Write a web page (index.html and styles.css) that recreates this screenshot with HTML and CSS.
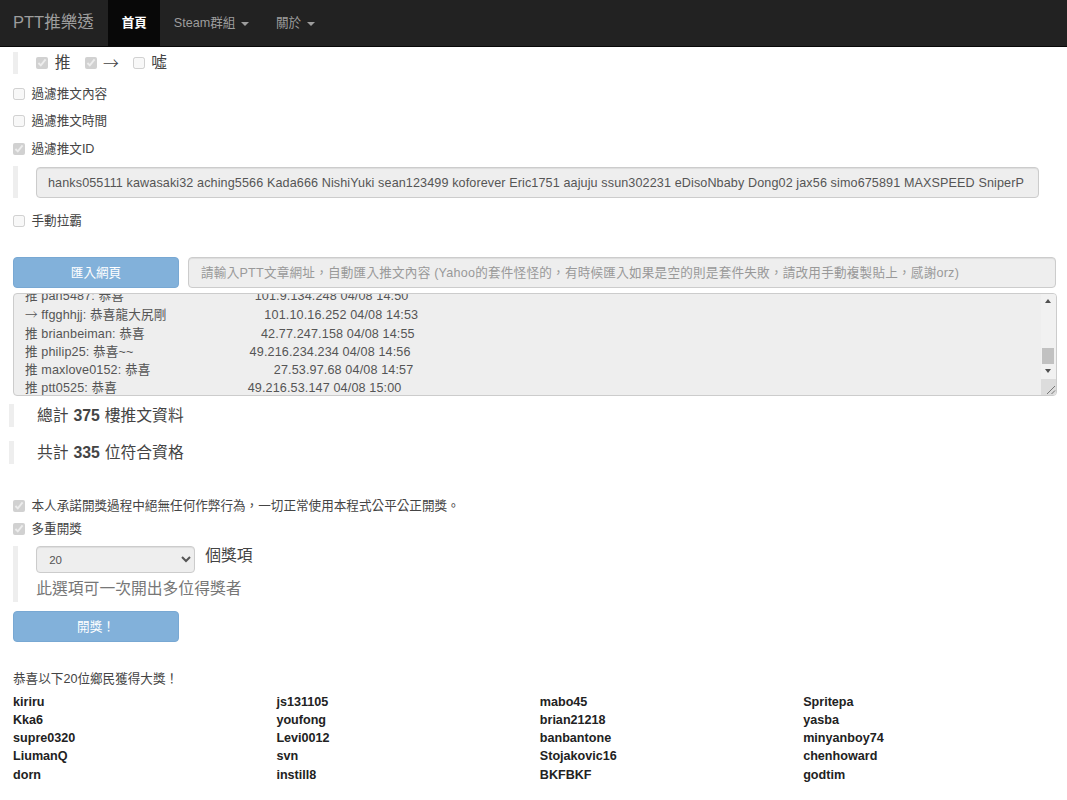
FILE: index.html
```html
<!DOCTYPE html>
<html lang="zh-Hant">
<head>
<meta charset="utf-8">
<title>PTT推樂透</title>
<link rel="stylesheet" href="styles.css">
</head>
<body>
<nav class="navbar">
  <a class="brand">PTT推樂透</a>
  <a class="nav-item active">首頁</a>
  <a class="nav-item">Steam群組 <span class="caret"></span></a>
  <a class="nav-item">關於 <span class="caret"></span></a>
</nav>
<main class="page">
  <div class="quote quote-types">
    <label class="type"><input type="checkbox" checked disabled> 推</label>
    <label class="type"><input type="checkbox" checked disabled> <span class="wide">→</span></label>
    <label class="type"><input type="checkbox" disabled> 噓</label>
  </div>
  <label class="check filter"><input type="checkbox" disabled> 過濾推文內容</label>
  <label class="check filter"><input type="checkbox" disabled> 過濾推文時間</label>
  <label class="check filter"><input type="checkbox" checked disabled> 過濾推文ID</label>
  <div class="quote quote-ids">
    <input class="field ids" type="text" disabled value="hanks055111 kawasaki32 aching5566 Kada666 NishiYuki sean123499 koforever Eric1751 aajuju ssun302231 eDisoNbaby Dong02 jax56 simo675891 MAXSPEED SniperP">
  </div>
  <label class="check filter manual"><input type="checkbox" disabled> 手動拉霸</label>

  <div class="import">
    <button class="btn" disabled>匯入網頁</button>
    <input class="field url" type="text" disabled placeholder="請輸入PTT文章網址，自動匯入推文內容 (Yahoo的套件怪怪的，有時候匯入如果是空的則是套件失敗，請改用手動複製貼上，感謝orz)">
  </div>

  <div class="log">
    <div class="log-lines">
      <div class="log-line">推 pan5487: 恭喜                                    101.9.134.248 04/08 14:50</div>
      <div class="log-line"><span class="wide">→</span> ffgghhjj: 恭喜龍大尻剛                           101.10.16.252 04/08 14:53</div>
      <div class="log-line">推 brianbeiman: 恭喜                                42.77.247.158 04/08 14:55</div>
      <div class="log-line">推 philip25: 恭喜~~                                49.216.234.234 04/08 14:56</div>
      <div class="log-line">推 maxlove0152: 恭喜                                  27.53.97.68 04/08 14:57</div>
      <div class="log-line">推 ptt0525: 恭喜                                    49.216.53.147 04/08 15:00</div>
    </div>
    <div class="scrollbar">
      <span class="arrow up"></span>
      <span class="track"><span class="thumb"></span></span>
      <span class="arrow down"></span>
      <span class="corner">
        <svg width="15" height="16" viewBox="0 0 15 16"><path d="M6 15 14 7M10.5 15l3.5-3.5" stroke="#777" stroke-width="1" fill="none"/></svg>
      </span>
    </div>
  </div>

  <div class="quote quote-stat first">總計 <b>375</b> 樓推文資料</div>
  <div class="quote quote-stat">共計 <b>335</b> 位符合資格</div>

  <label class="check promise"><input type="checkbox" checked disabled> 本人承諾開獎過程中絕無任何作弊行為，一切正常使用本程式公平公正開獎。</label>
  <label class="check multi"><input type="checkbox" checked disabled> 多重開獎</label>
  <div class="quote quote-multi">
    <div class="prize-row">
      <select class="field count" disabled><option>20</option></select>
      <span>個獎項</span>
    </div>
    <div class="hint">此選項可一次開出多位得獎者</div>
  </div>
  <button class="btn draw" disabled>開獎！</button>

  <p class="congrats">恭喜以下20位鄉民獲得大獎！</p>
  <div class="winners">
    <b>kiriru</b><b>js131105</b><b>mabo45</b><b>Spritepa</b>
    <b>Kka6</b><b>youfong</b><b>brian21218</b><b>yasba</b>
    <b>supre0320</b><b>Levi0012</b><b>banbantone</b><b>minyanboy74</b>
    <b>LiumanQ</b><b>svn</b><b>Stojakovic16</b><b>chenhoward</b>
    <b>dorn</b><b>instill8</b><b>BKFBKF</b><b>godtim</b>
  </div>
</main>
</body>
</html>
```
FILE: styles.css
```css
* { box-sizing: border-box; }
html, body { margin: 0; height: 800px; overflow: hidden; }
body {
  font-family: "Liberation Sans", "Noto Sans CJK TC", sans-serif;
  font-size: 12.6px;
  line-height: 18px;
  color: #444;
  background: #fff;
}
.navbar {
  display: flex;
  height: 47px;
  background: #222;
  border-bottom: 1px solid #080808;
}
.brand { padding: 0 14.5px 0 13px; font-size: 16.5px; line-height: 45px; color: #9d9d9d; }
.nav-item { padding: 0 13.5px; line-height: 46px; color: #9d9d9d; }
.nav-item.active { background: #080808; color: #fff; font-weight: 700; }
.caret {
  display: inline-block;
  margin-left: 2px;
  vertical-align: middle;
  border-top: 4px solid #9d9d9d;
  border-left: 4px solid transparent;
  border-right: 4px solid transparent;
}
.wide { font-family: "Noto Sans CJK TC", sans-serif; font-weight: 300; }
.page { padding: 5px 10px 0 13px; }
input[type="checkbox"] { width: 12px; height: 12px; margin: 0; flex: none; }
.quote { border-left: 5px solid #eee; padding-left: 18.2px; font-size: 15.8px; }
.quote-types { display: flex; height: 22px; align-items: center; gap: 14px; }
.type { display: flex; align-items: center; gap: 6.5px; }
.check { display: flex; align-items: center; gap: 6.5px; height: 18px; }
.filter { margin-top: 9.5px; }
.quote-types + .filter { margin-top: 10.5px; }
.quote-ids { margin-top: 8.5px; height: 32px; padding-top: 1px; }
.field {
  font: inherit;
  font-size: 12.6px;
  color: #555;
  background: #eee;
  border: 1px solid #ccc;
  border-radius: 4px;
  box-shadow: inset 0 1px 1px rgba(0,0,0,.075);
  opacity: 1;
}
.ids { display: block; width: 1002.5px; height: 31px; padding: 0 10.8px; letter-spacing: .11px; }
.manual { margin-top: 14px; }
.import { display: flex; gap: 9px; margin-top: 27px; }
.btn {
  width: 166px;
  height: 31px;
  font: inherit;
  color: #fff;
  background: #82b1da;
  border: 1px solid #78a8d3;
  border-radius: 4px;
  padding: 0;
  opacity: 1;
}
.url { width: 868px; height: 31px; padding: 0 12px; letter-spacing: .22px; }
.url::placeholder { color: #999; opacity: 1; }
.log {
  position: relative;
  width: 1043.7px;
  height: 103px;
  margin-top: 4.5px;
  overflow: hidden;
  background: #eee;
  border: 1px solid #ccc;
  border-radius: 4px;
  color: #555;
}
.log-lines { margin-top: -6.4px; padding-left: 11px; letter-spacing: .13px; line-height: 18.2px; }
.log-line { white-space: pre; }
.scrollbar {
  position: absolute;
  top: 0;
  right: 0;
  bottom: 0;
  width: 15px;
  display: flex;
  flex-direction: column;
  background: #f1f1f1;
}
.arrow { height: 15px; flex: none; position: relative; }
.arrow::after {
  content: "";
  position: absolute;
  left: 4px;
  top: 5.5px;
  border-left: 3.5px solid transparent;
  border-right: 3.5px solid transparent;
}
.up::after { border-bottom: 4px solid #505050; }
.down::after { border-top: 4px solid #505050; }
.track { flex: 1; display: flex; align-items: flex-end; padding-left: 1.5px; }
.thumb { width: 12px; height: 16px; background: #c1c1c1; }
.corner { height: 16px; flex: none; background: #dcdcdc; }
.corner svg { display: block; }
.quote-stat { height: 23px; line-height: 23px; margin-left: -4.5px; padding-left: 23.5px; margin-top: 14px; word-spacing: .5px; }
.quote-stat.first { margin-top: 8.5px; }
.promise { margin-top: 32.5px; }
.multi { margin-top: 5px; }
.quote-multi { margin-top: 8.5px; height: 55.5px; }
.prize-row { display: flex; gap: 10px; height: 27px; line-height: 20px; }
.count { width: 159px; height: 27px; font-size: 11.5px; padding: 0 8px; }
.hint { color: #777; margin-top: 4px; line-height: 24px; }
.draw { display: block; margin-top: 9.5px; }
.congrats { margin: 27.5px 0 0; }
.winners {
  display: grid;
  grid-template-columns: repeat(4, 263.4px);
  margin-top: 5px;
  line-height: 18.25px;
  color: #222;
}
```
